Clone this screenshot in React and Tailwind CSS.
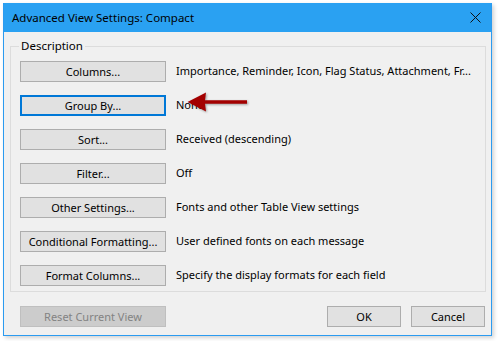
import React from 'react';

const font = { fontFamily: '"Noto Sans", "Segoe UI", sans-serif' };

const rows = [
  { label: 'Columns...', text: 'Importance, Reminder, Icon, Flag Status, Attachment, Fr...' },
  { label: 'Group By...', text: 'None', focused: true },
  { label: 'Sort...', text: 'Received (descending)' },
  { label: 'Filter...', text: 'Off' },
  { label: 'Other Settings...', text: 'Fonts and other Table View settings' },
  { label: 'Conditional Formatting...', text: 'User defined fonts on each message' },
  { label: 'Format Columns...', text: 'Specify the display formats for each field' },
];

function Btn({ children, focused, disabled, className = '' }) {
  const look = disabled
    ? 'bg-[#cccccc] border border-[#bfbfbf] text-[#838383]'
    : focused
    ? 'bg-[#e1e1e1] border-2 border-[#0078d7] text-black'
    : 'bg-[#e1e1e1] border border-[#adadad] text-black';
  return (
    <div className={`h-[21px] flex items-center justify-center text-[11px] leading-none shrink-0 ${look} ${className}`}>
      {children}
    </div>
  );
}

function Arrow() {
  return (
    <svg
      className="absolute left-[166px] top-[-4px]"
      width="64"
      height="24"
      viewBox="0 0 64 24"
      style={{ filter: 'drop-shadow(1px 1px 1px rgba(0,0,0,0.35))' }}
    >
      <path d="M1.5 11 L20 1.5 L19 9.2 L61 9.2 L61 12.8 L19 12.8 L20 20.5 Z" fill="#a30000" />
    </svg>
  );
}

export default function App() {
  return (
    <div className="w-[498px] h-[341px] bg-white pl-[3px] pt-[3px]" style={font}>
      <div className="w-[489px] h-[333px] border border-[#2b9bf0] border-t-0 bg-[#f0f0f0] flex flex-col shadow-[2px_2px_4px_rgba(0,0,0,0.18)]">
        {/* Title bar */}
        <div className="h-[29px] bg-[#2aa1f2] flex items-center justify-between pl-[8px] pr-[10px] shrink-0">
          <span className="text-[11.5px] text-black">Advanced View Settings: Compact</span>
          <svg width="11" height="11" viewBox="0 0 11 11">
            <path d="M0.5 0.5 L10.5 10.5 M10.5 0.5 L0.5 10.5" stroke="#111" strokeWidth="1" />
          </svg>
        </div>

        {/* Body */}
        <div className="flex flex-col pl-[6px] pr-[5px] pt-[6px]">
          <fieldset className="border border-[#dcdcdc] pl-[9px] pr-[9px] pt-[7px] pb-[5px] m-0">
            <legend className="text-[11.5px] leading-[16px] text-black px-[2px] ml-[-1px]">Description</legend>
            <div className="flex flex-col gap-[13px]">
              {rows.map((r) => (
                <div key={r.label} className="relative flex items-center gap-[10px]">
                  <Btn focused={r.focused} className="w-[146px]">{r.label}</Btn>
                  <span className="text-[11px] text-black whitespace-nowrap">{r.text}</span>
                  {r.focused && <Arrow />}
                </div>
              ))}
            </div>
          </fieldset>

          <div className="flex items-center mt-[14px] pl-[10px] pr-[1px]">
            <Btn disabled className="w-[146px]">Reset Current View</Btn>
            <div className="flex-1" />
            <Btn className="w-[74px]">OK</Btn>
            <Btn className="w-[74px] ml-[10px]">Cancel</Btn>
          </div>
        </div>
      </div>
    </div>
  );
}
